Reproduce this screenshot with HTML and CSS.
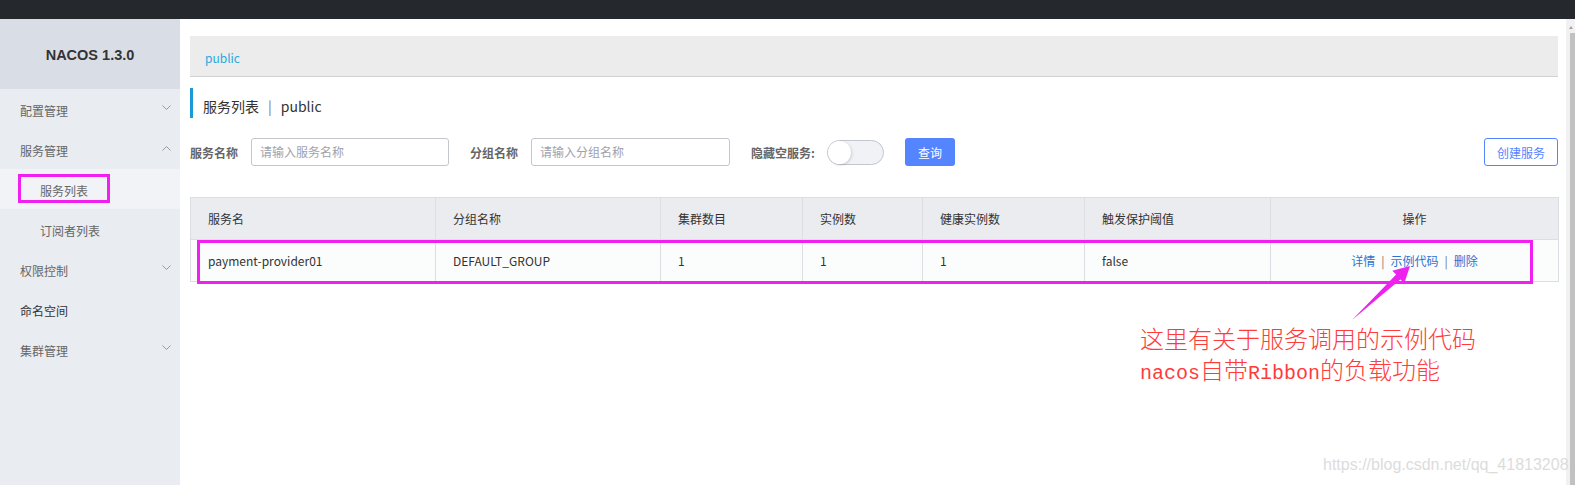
FILE: index.html
```html
<!DOCTYPE html>
<html lang="zh-CN">
<head>
<meta charset="utf-8">
<title>Nacos</title>
<link rel="stylesheet" href="styles.css">
</head>
<body>
<div class="topbar"></div>
<div class="app">
  <aside class="sidebar">
    <div class="brand">NACOS 1.3.0</div>
    <ul class="menu">
      <li class="item"><span>配置管理</span><svg class="chev" width="9" height="6" viewBox="0 0 9 6"><polyline points="0.5,0.5 4.5,4.5 8.5,0.5"/></svg></li>
      <li class="item"><span>服务管理</span><svg class="chev" width="9" height="6" viewBox="0 0 9 6"><polyline points="0.5,5.5 4.5,1.5 8.5,5.5"/></svg></li>
      <li class="sub active"><span>服务列表</span><span class="mark"></span></li>
      <li class="sub"><span>订阅者列表</span></li>
      <li class="item"><span>权限控制</span><svg class="chev" width="9" height="6" viewBox="0 0 9 6"><polyline points="0.5,0.5 4.5,4.5 8.5,0.5"/></svg></li>
      <li class="item dark"><span>命名空间</span></li>
      <li class="item"><span>集群管理</span><svg class="chev" width="9" height="6" viewBox="0 0 9 6"><polyline points="0.5,0.5 4.5,4.5 8.5,0.5"/></svg></li>
    </ul>
  </aside>
  <main class="content">
    <div class="crumb">public</div>
    <div class="title"><span>服务列表</span><span class="sep">|</span><span>public</span></div>
    <div class="search">
      <label class="label">服务名称</label>
      <div class="input w1">请输入服务名称</div>
      <label class="label">分组名称</label>
      <div class="input w2">请输入分组名称</div>
      <label class="label">隐藏空服务:</label>
      <div class="switch"><span class="knob"></span></div>
      <button class="btn-primary">查询</button>
      <button class="btn-outline">创建服务</button>
    </div>
    <div class="table-wrap">
      <table class="grid">
        <colgroup>
          <col class="c1"><col class="c2"><col class="c3"><col class="c4"><col class="c5"><col class="c6"><col class="c7">
        </colgroup>
        <thead>
          <tr>
            <th>服务名</th><th>分组名称</th><th>集群数目</th><th>实例数</th><th>健康实例数</th><th>触发保护阈值</th><th class="center">操作</th>
          </tr>
        </thead>
        <tbody>
          <tr>
            <td>payment-provider01</td><td>DEFAULT_GROUP</td><td>1</td><td>1</td><td>1</td><td>false</td>
            <td class="center"><a class="link">详情</a><span class="bar">|</span><a class="link">示例代码</a><span class="bar">|</span><a class="link">删除</a></td>
          </tr>
        </tbody>
      </table>
      <div class="row-mark"></div>
    </div>
  </main>
  <div class="scrollbar"><span class="up"></span><div class="thumb"></div></div>
</div>
<svg class="arrow" width="80" height="70" viewBox="1345 260 80 70">
  <polygon points="1352,320 1396.2,274.6 1392.3,270.8 1410,266 1404.3,283.2 1400.4,279.4"/>
</svg>
<div class="annot">
  <div class="line">这里有关于服务调用的示例代码</div>
  <div class="line"><span class="latin">nacos</span>自带<span class="latin">Ribbon</span>的负载功能</div>
</div>
<div class="watermark">https://blog.csdn.net/qq_41813208</div>
</body>
</html>
```
FILE: styles.css
```css
* { box-sizing: border-box; }
html, body { margin: 0; padding: 0; }
body {
  width: 1575px;
  height: 485px;
  overflow: hidden;
  position: relative;
  background: #fff;
  font-family: "Noto Sans CJK SC", "Noto Sans", sans-serif;
  font-size: 12px;
  color: #333;
}
.topbar { height: 19px; background: #25292e; }
.app { display: flex; height: 466px; }

/* sidebar */
.sidebar { width: 180px; flex: none; background: #e9ecf1; }
.brand {
  height: 70px;
  background: #d9dee6;
  display: flex;
  align-items: center;
  justify-content: center;
  font-family: "Liberation Sans", sans-serif;
  font-weight: bold;
  font-size: 14.5px;
  color: #333;
  padding-top: 2px;
}
.menu { list-style: none; margin: 0; padding: 0; }
.menu li {
  height: 40px;
  display: flex;
  align-items: center;
  justify-content: space-between;
  position: relative;
  color: #666;
  font-size: 12px;
  padding: 3px 9px 0 20px;
}
.menu li.sub { padding-left: 40px; }
.menu li.active { background: #f2f3f7; }
.menu li.dark { color: #333; }
.chev { margin-top: -6px; }
.chev polyline { fill: none; stroke: #999; stroke-width: 1; }
.mark {
  position: absolute;
  left: 18px;
  top: 5px;
  width: 92px;
  height: 29px;
  border: 3px solid #f020f0;
}

/* content */
.content { flex: 1; min-width: 0; padding: 17px 8px 0 10px; }
.crumb {
  height: 41px;
  background: #ececec;
  border-bottom: 1px solid #d2d2d2;
  padding: 0 15px;
  line-height: 44px;
  color: #2aa9de;
  font-size: 12px;
}
.title {
  margin-top: 11px;
  height: 30px;
  border-left: 3px solid #1a9ad6;
  padding-left: 10px;
  font-size: 14px;
  line-height: 36px;
  color: #333;
  display: flex;
}
.title .sep { margin: 0 9px 0 9px; color: #777; }

.search {
  margin-top: 20px;
  height: 28px;
  display: flex;
  align-items: center;
}
.label {
  font-weight: bold;
  color: #666;
  font-size: 12px;
  margin-right: 13px;
}
.input {
  height: 28px;
  border: 1px solid #c4c6cf;
  border-radius: 3px;
  padding: 0 8px;
  line-height: 26px;
  color: #a0a2ad;
  font-size: 12px;
  margin-right: 21px;
}
.w1 { width: 198px; }
.w2 { width: 199px; }
.switch {
  width: 57px;
  height: 25px;
  border: 1px solid #c4c6cf;
  border-radius: 13px;
  background: #f1f2f6;
  position: relative;
  margin-right: 21px;
  margin-left: -1px;
}
.knob {
  position: absolute;
  left: 0;
  top: 0;
  width: 23px;
  height: 23px;
  border-radius: 50%;
  background: #fff;
  box-shadow: 1px 1px 3px rgba(0,0,0,0.15);
}
.btn-primary {
  width: 50px;
  height: 28px;
  border: none;
  border-radius: 3px;
  background: #5584ff;
  color: #fff;
  font-family: inherit;
  font-size: 12px;
  padding: 0;
}
.btn-outline {
  margin-left: auto;
  width: 74px;
  height: 28px;
  border: 1px solid #5584ff;
  border-radius: 3px;
  background: #fff;
  color: #5584ff;
  font-family: inherit;
  font-size: 12px;
  padding: 0;
}

/* table */
.table-wrap { position: relative; margin-top: 31px; }
.grid {
  width: 100%;
  border-collapse: collapse;
  table-layout: fixed;
  border: 1px solid #dcdee3;
}
.c1 { width: 245px; }
.c2 { width: 225px; }
.c3 { width: 142px; }
.c4 { width: 120px; }
.c5 { width: 162px; }
.c6 { width: 186px; }
.c7 { width: 288px; }
.grid th, .grid td {
  border: 1px solid #dcdee3;
  text-align: left;
  padding: 0 0 0 17px;
  font-weight: normal;
  font-size: 12px;
  color: #333;
}
.grid th { height: 42px; background: #ebecf0; }
.grid td { height: 42px; background: #fbfcfc; }
.grid .center { text-align: center; padding: 0; }
.link { color: #2f72d3; }
.bar { color: #777; margin: 0 6px; }
.row-mark {
  position: absolute;
  left: 7px;
  top: 43px;
  width: 1336px;
  height: 44px;
  border: 3px solid #f020f0;
}

/* scrollbar */
.scrollbar {
  width: 9px;
  flex: none;
  background: #f1f1f1;
  position: relative;
}
.scrollbar .up {
  position: absolute;
  left: 3px;
  top: 7px;
  width: 0;
  height: 0;
  border-left: 2px solid transparent;
  border-right: 2px solid transparent;
  border-bottom: 3px solid #a3a3a3;
}
.thumb {
  position: absolute;
  left: 4px;
  right: 0;
  top: 14px;
  bottom: 0;
  background: #c1c1c1;
}

/* annotation overlay */
.arrow { position: absolute; left: 1345px; top: 260px; }
.arrow polygon { fill: #ee22ee; }
.annot {
  position: absolute;
  left: 1140px;
  top: 325px;
  font-size: 24px;
  color: #ff3c3c;
  font-family: "Liberation Serif", "Noto Sans CJK SC", serif;
  font-weight: 300;
  white-space: nowrap;
}
.annot .line { height: 31px; line-height: 31px; }
.latin { font-family: "Liberation Mono", monospace; font-size: 20px; }
.watermark {
  position: absolute;
  left: 1323px;
  top: 456px;
  font-family: "Liberation Sans", sans-serif;
  font-size: 16px;
  line-height: 18px;
  color: #dcdcdc;
}
```
